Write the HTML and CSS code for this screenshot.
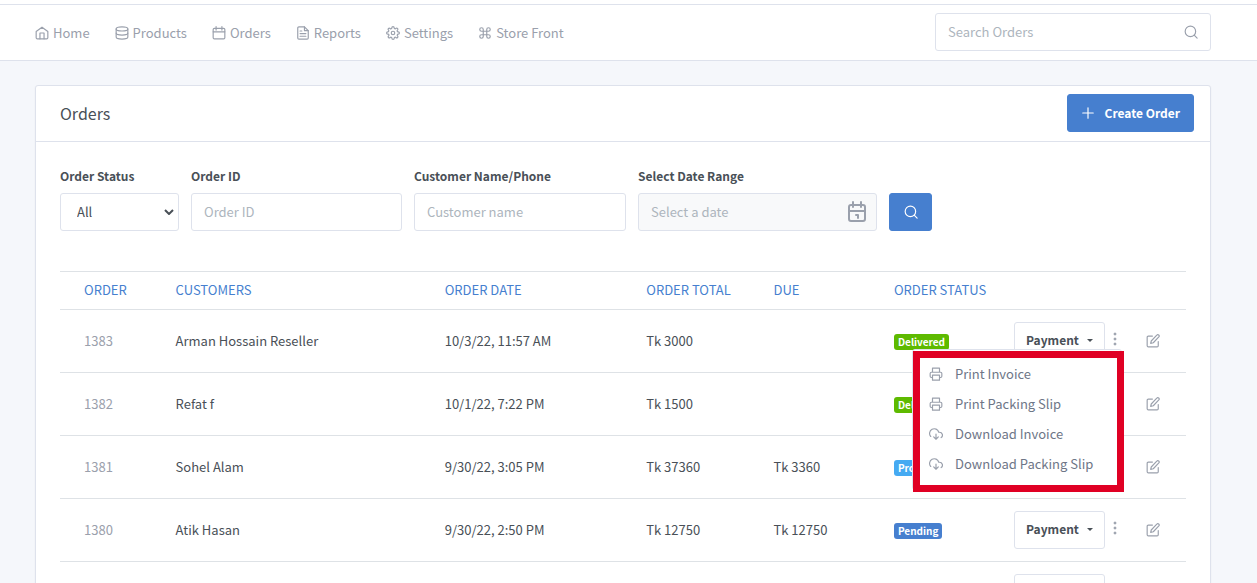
FILE: index.html
```html
<!DOCTYPE html>
<html lang="en">
<head>
<meta charset="utf-8">
<title>Orders</title>
<link rel="stylesheet" href="styles.css">
</head>
<body>
<svg class="sprite" aria-hidden="true">
  <symbol id="i-home" viewBox="0 0 24 24"><path d="M2 9.500 12 2l10 7.500V20a2 2 0 0 1-2 2H4a2 2 0 0 1-2-2z"/><path d="M8.500 22V12h7v10"/></symbol>
  <symbol id="i-db" viewBox="0 0 24 24"><ellipse cx="12" cy="5" rx="10" ry="3.500"/><path d="M22 12c0 2-4.500 3.500-10 3.500S2 14 2 12"/><path d="M2 5v14c0 2 4.500 3.500 10 3.500S22 21 22 19V5"/></symbol>
  <symbol id="i-cal" viewBox="0 0 24 24"><rect x="2" y="4" width="20" height="18" rx="2"/><path d="M17 1v6M7 1v6M2 10h20"/></symbol>
  <symbol id="i-file" viewBox="0 0 24 24"><path d="M14.500 1.500H5a2 2 0 0 0-2 2v17a2 2 0 0 0 2 2h14a2 2 0 0 0 2-2V8z"/><path d="M14.500 1.500V8H21M17 13H7M17 17.500H7M10 8.500H7"/></symbol>
  <symbol id="i-gear" viewBox="0 0 24 24"><circle cx="12" cy="12" r="3"/><path d="M19.400 15a1.650 1.650 0 0 0 .33 1.820l.06.06a2 2 0 1 1-2.830 2.830l-.06-.06a1.650 1.650 0 0 0-2.800 1.170V21a2 2 0 0 1-4 0v-.09a1.650 1.650 0 0 0-2.900-1.090l-.06.06a2 2 0 1 1-2.830-2.830l.06-.06A1.650 1.650 0 0 0 3.090 14H3a2 2 0 0 1 0-4h.09a1.650 1.650 0 0 0 1.180-2.820l-.06-.06a2 2 0 1 1 2.830-2.830l.06.06A1.650 1.650 0 0 0 10 3.090V3a2 2 0 0 1 4 0v.09a1.650 1.650 0 0 0 2.820 1.180l.06-.06a2 2 0 1 1 2.830 2.830l-.06.06A1.650 1.650 0 0 0 20.910 10H21a2 2 0 0 1 0 4h-.09a1.650 1.650 0 0 0-1.510 1z"/></symbol>
  <symbol id="i-cmd" viewBox="0 0 24 24"><path d="M18 3a3 3 0 0 0-3 3v12a3 3 0 1 0 3-3H6a3 3 0 1 0 3 3V6a3 3 0 1 0-3 3h12a3 3 0 0 0 0-6z"/></symbol>
  <symbol id="i-search" viewBox="0 0 24 24"><circle cx="11" cy="11" r="9"/><path d="m22.500 22.500-5-5"/></symbol>
  <symbol id="i-plus" viewBox="0 0 24 24"><path d="M12 3v18M3 12h18"/></symbol>
  <symbol id="i-edit" viewBox="0 0 24 24"><path d="M11 3.500H4a2 2 0 0 0-2 2V20a2 2 0 0 0 2 2h15a2 2 0 0 0 2-2v-7"/><path d="M18.500 2a2.120 2.120 0 0 1 3.500 3L12.500 15l-4.500 1 1-4z"/></symbol>
  <symbol id="i-print" viewBox="0 0 24 24"><path d="M6 9V2h12v7M6 18H4a2 2 0 0 1-2-2v-5a2 2 0 0 1 2-2h16a2 2 0 0 1 2 2v5a2 2 0 0 1-2 2h-2"/><path d="M6 14h12v8.500H6z"/></symbol>
  <symbol id="i-cloud" viewBox="0 0 24 24"><path d="m8 17 4 4 4-4M12 12v9"/><path d="M20.880 18.090A5 5 0 0 0 18 9h-1.260A8 8 0 1 0 3 16.290"/></symbol>
  <symbol id="i-range" viewBox="0 0 20 22"><rect x="2" y="4" width="16" height="16" rx="2"/><path d="M6 1v5M14 1v5M2 10h16"/><path d="M9 14h2v3"/></symbol>
  <symbol id="i-dots" viewBox="0 0 6 14"><circle cx="3" cy="2" r="1"/><circle cx="3" cy="7" r="1"/><circle cx="3" cy="12" r="1"/></symbol>
</svg>

<header class="topbar">
  <nav class="nav">
    <a href="#"><svg class="icon"><use href="#i-home"/></svg>Home</a>
    <a href="#"><svg class="icon"><use href="#i-db"/></svg>Products</a>
    <a href="#"><svg class="icon"><use href="#i-cal"/></svg>Orders</a>
    <a href="#"><svg class="icon"><use href="#i-file"/></svg>Reports</a>
    <a href="#"><svg class="icon"><use href="#i-gear"/></svg>Settings</a>
    <a href="#"><svg class="icon"><use href="#i-cmd"/></svg>Store Front</a>
  </nav>
  <div class="field search">
    <input class="control" type="search" placeholder="Search Orders" aria-label="Search Orders">
    <svg class="icon field-icon"><use href="#i-search"/></svg>
  </div>
</header>

<main class="card">
  <div class="card-header">
    <h1>Orders</h1>
    <button class="btn btn-primary" type="button"><svg class="icon"><use href="#i-plus"/></svg>Create Order</button>
  </div>
  <div class="card-body">
    <form class="filters">
      <div>
        <label for="status">Order Status</label>
        <div class="field">
          <select class="control" id="status"><option>All</option></select>
          <svg class="chevron" viewBox="0 0 10 6"><path d="m1 1 4 4 4-4"/></svg>
        </div>
      </div>
      <div>
        <label for="order-id">Order ID</label>
        <input class="control" id="order-id" type="text" placeholder="Order ID">
      </div>
      <div>
        <label for="customer">Customer Name/Phone</label>
        <input class="control" id="customer" type="text" placeholder="Customer name">
      </div>
      <div>
        <label for="range">Select Date Range</label>
        <div class="field">
          <input class="control readonly" id="range" type="text" placeholder="Select a date" readonly>
          <svg class="icon range-icon"><use href="#i-range"/></svg>
        </div>
      </div>
      <button class="btn btn-primary btn-search" type="button" aria-label="Search"><svg class="icon"><use href="#i-search"/></svg></button>
    </form>

    <table class="orders">
      <colgroup><col class="c-id"><col class="c-customer"><col class="c-date"><col class="c-total"><col class="c-due"><col class="c-status"><col class="c-actions"><col class="c-edit"></colgroup>
      <thead>
        <tr><th>ORDER</th><th>CUSTOMERS</th><th>ORDER DATE</th><th>ORDER TOTAL</th><th>DUE</th><th>ORDER STATUS</th><th></th><th></th></tr>
      </thead>
      <tbody>
        <tr>
          <td>1383</td><td>Arman Hossain Reseller</td><td>10/3/22, 11:57 AM</td><td>Tk 3000</td><td></td>
          <td><span class="badge green">Delivered</span></td>
          <td><div class="actions">
            <button class="btn btn-payment" type="button">Payment<span class="caret"></span></button>
            <button class="more" type="button" aria-label="More"><svg><use href="#i-dots"/></svg></button>
            <div class="menu">
              <a href="#"><svg class="icon"><use href="#i-print"/></svg>Print Invoice</a>
              <a href="#"><svg class="icon"><use href="#i-print"/></svg>Print Packing Slip</a>
              <a href="#"><svg class="icon"><use href="#i-cloud"/></svg>Download Invoice</a>
              <a href="#"><svg class="icon"><use href="#i-cloud"/></svg>Download Packing Slip</a>
            </div>
          </div></td>
          <td><a class="edit" href="#" aria-label="Edit"><svg class="icon"><use href="#i-edit"/></svg></a></td>
        </tr>
        <tr>
          <td>1382</td><td>Refat f</td><td>10/1/22, 7:22 PM</td><td>Tk 1500</td><td></td>
          <td><span class="badge green">Delivered</span></td>
          <td><div class="actions">
            <button class="btn btn-payment" type="button">Payment<span class="caret"></span></button>
            <button class="more" type="button" aria-label="More"><svg><use href="#i-dots"/></svg></button>
          </div></td>
          <td><a class="edit" href="#" aria-label="Edit"><svg class="icon"><use href="#i-edit"/></svg></a></td>
        </tr>
        <tr>
          <td>1381</td><td>Sohel Alam</td><td>9/30/22, 3:05 PM</td><td>Tk 37360</td><td>Tk 3360</td>
          <td><span class="badge azure">Processing</span></td>
          <td><div class="actions">
            <button class="btn btn-payment" type="button">Payment<span class="caret"></span></button>
            <button class="more" type="button" aria-label="More"><svg><use href="#i-dots"/></svg></button>
          </div></td>
          <td><a class="edit" href="#" aria-label="Edit"><svg class="icon"><use href="#i-edit"/></svg></a></td>
        </tr>
        <tr>
          <td>1380</td><td>Atik Hasan</td><td>9/30/22, 2:50 PM</td><td>Tk 12750</td><td>Tk 12750</td>
          <td><span class="badge blue">Pending</span></td>
          <td><div class="actions">
            <button class="btn btn-payment" type="button">Payment<span class="caret"></span></button>
            <button class="more" type="button" aria-label="More"><svg><use href="#i-dots"/></svg></button>
          </div></td>
          <td><a class="edit" href="#" aria-label="Edit"><svg class="icon"><use href="#i-edit"/></svg></a></td>
        </tr>
        <tr>
          <td></td><td></td><td></td><td></td><td></td><td></td>
          <td><div class="actions">
            <button class="btn btn-payment" type="button" aria-label="Payment"></button>
          </div></td>
          <td></td>
        </tr>
      </tbody>
    </table>
  </div>
</main>
</body>
</html>
```
FILE: styles.css
```css
* { box-sizing: border-box; }

html { scrollbar-width: none; }

body {
  margin: 0;
  background: #f5f7fb;
  color: #495057;
  font: 13px/20px "Noto Sans CJK SC", "Open Sans", sans-serif;
}

a { color: inherit; text-decoration: none; }

.sprite { position: absolute; width: 0; height: 0; }

.icon {
  flex: none;
  width: 14px;
  height: 14px;
  fill: none;
  stroke: currentColor;
  stroke-width: 2;
  stroke-linecap: round;
  stroke-linejoin: round;
}

.topbar {
  display: flex;
  align-items: center;
  justify-content: space-between;
  margin-top: 4px;
  padding: 8px 46px 9px 35px;
  background: #fff;
  border-top: 1px solid #dee2ec;
  border-bottom: 1px solid #dee2ec;
  box-shadow: 0 -4px #fff;
}

.nav { display: flex; gap: 25px; padding-top: 1px; color: #9aa0ac; }
.nav a { display: flex; align-items: center; gap: 4px; }

.field { position: relative; }
.search { width: 276px; }

.control {
  display: block;
  width: 100%;
  height: 38px;
  padding: 0 12px 2px;
  border: 1px solid #dee2ec;
  border-radius: 3px;
  background: #fff;
  color: #495057;
  font: inherit;
  appearance: none;
}
.control::placeholder { color: #adb5bd; opacity: 1; }
select.control { padding: 0 16px; }
.readonly { background: #f8f9fa; }

.field-icon { position: absolute; right: 13px; top: 12px; color: #9aa0ac; }
.range-icon { position: absolute; right: 10px; top: 8px; width: 20px; height: 22px; color: #9aa0ac; }
.chevron {
  position: absolute;
  right: 5px;
  top: 16px;
  width: 10px;
  height: 6px;
  fill: none;
  stroke: #495057;
  stroke-width: 2;
  pointer-events: none;
}

.card {
  margin: 24px 46px 24px 35px;
  background: #fff;
  border: 1px solid #dee2ec;
  border-radius: 3px;
  box-shadow: 0 1px 2px rgba(0, 0, 0, 0.05);
}

.card-header {
  display: flex;
  align-items: center;
  justify-content: space-between;
  padding: 8px 16px 9px 24px;
  border-bottom: 1px solid #dee2ec;
}
.card-header h1 { margin: 0; font-size: 16px; font-weight: 400; }

.card-body { padding: 24px; }

.btn {
  display: inline-flex;
  align-items: center;
  justify-content: center;
  height: 38px;
  padding: 0 13px;
  border: 1px solid #dee2ec;
  border-radius: 3px;
  background: #fff;
  color: #495057;
  font: inherit;
  font-size: 12px;
  font-weight: 600;
}
.btn-primary { gap: 10px; border-color: #467fcf; background: #467fcf; color: #fff; }

.filters {
  display: grid;
  grid-template-columns: 119fr 211fr 212fr 239fr 43fr 242fr;
  gap: 12px;
  align-items: end;
  margin-bottom: 40px;
}
.filters label { display: block; margin-bottom: 7px; font-size: 12px; font-weight: 600; }
.btn-search { padding: 0; }

.orders { width: 100%; table-layout: fixed; border-collapse: collapse; }
.c-id { width: 9.2%; }
.c-customer { width: 23.9%; }
.c-date { width: 17.9%; }
.c-total { width: 11.3%; }
.c-due { width: 10.7%; }
.c-actions { width: 132px; }
.c-edit { width: 52px; }

.orders th, .orders td {
  padding: 12px;
  border-top: 1px solid #dee2e6;
  text-align: left;
  white-space: nowrap;
}
.orders th:first-child, .orders td:first-child { padding-left: 24px; }
.orders th { height: 38px; padding-block: 7px 9px; color: #467fcf; font-weight: 400; }
.orders td { height: 63px; }
.orders td:first-child { color: #9aa0ac; }

.badge {
  display: inline-block;
  padding: 0 4px;
  border-radius: 3px;
  color: #fff;
  font-size: 10px;
  font-weight: 600;
  line-height: 16px;
}
.green { background: #5eba00; }
.azure { background: #45aaf2; }
.blue { background: #467fcf; }

.actions { position: relative; display: flex; align-items: center; gap: 7px; }
.btn-payment { width: 91px; padding-bottom: 2px; gap: 8px; }
.caret { border: 3px solid transparent; border-top-color: currentColor; border-bottom: 0; }
.more { height: 22px; padding: 0 0 4px; border: 0; background: none; line-height: 0; }
.more svg { width: 6px; height: 14px; fill: #9aa0ac; stroke: #9aa0ac; }
.edit { display: flex; color: #9aa0ac; }

.menu {
  position: absolute;
  z-index: 1;
  top: 27px;
  right: 0;
  width: 210px;
  padding: 9px 16px 10px;
  border: 1px solid #dee2ec;
  border-radius: 3px;
  background: #fff;
  color: #6e7687;
}
.menu::after {
  content: "";
  position: absolute;
  inset: 1px -3px -3px 0;
  border: 7px solid #e00024;
  pointer-events: none;
}
.menu a { display: flex; align-items: center; gap: 12px; padding: 5px 0; }
.menu .icon { color: #9aa0ac; }
```
